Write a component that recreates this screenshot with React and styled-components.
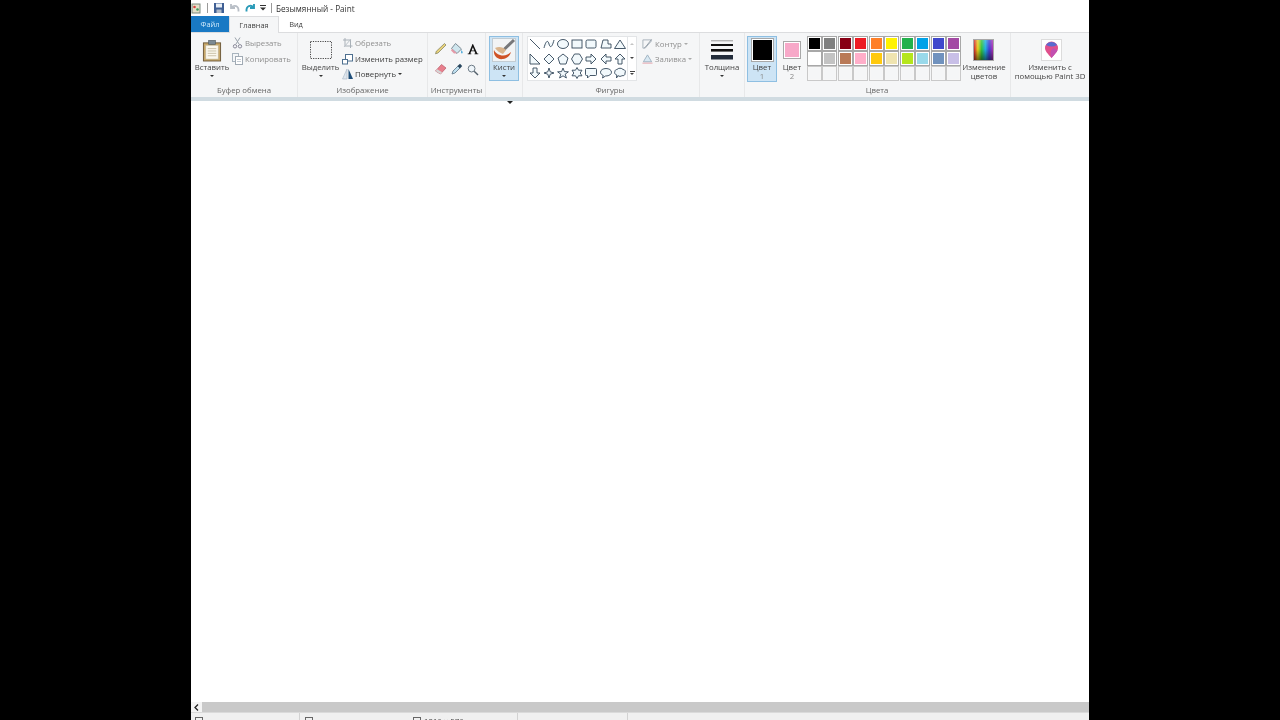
import React from 'react';
import styled, { createGlobalStyle } from 'styled-components';

const GlobalStyle = createGlobalStyle`
  html, body {
    margin: 0;
    padding: 0;
    background: #000;
  }
  * {
    box-sizing: border-box;
  }
`

const Stage = styled.div`
  width: 1280px;
  height: 720px;
  display: flex;
  justify-content: center;
  background: #000;
  overflow: hidden;
`

const Window = styled.div`
  width: 898px;
  height: 720px;
  display: flex;
  flex-direction: column;
  background: #fff;
  font-family: "Open Sans", "Noto Sans", sans-serif;
  font-size: 7.8px;
  color: #444;
  filter: blur(0.3px);
`

const TitleBar = styled.div`
  height: 16px;
  flex: none;
  display: flex;
  align-items: center;
  background: #fff;
  overflow: hidden;
`

const QuickButton = styled.div`
  width: ${p => p.$w}px;
  height: 16px;
  flex: none;
  display: flex;
  align-items: center;
  justify-content: center;
`

const TitleDivider = styled.div`
  width: 1px;
  height: 10px;
  flex: none;
  margin: 0 ${p => p.$right}px 0 ${p => p.$left}px;
  background: #9a9a9a;
`

const TitleText = styled.span`
  font-size: 8.2px;
  color: #333;
  white-space: nowrap;
`

const TabRow = styled.div`
  height: 17px;
  flex: none;
  display: flex;
  background: #fff;
  border-bottom: 1px solid #dcdddf;
`

const Tab = styled.div`
  width: ${p => p.$w}px;
  height: ${p => (p.$active ? 17 : 16)}px;
  display: flex;
  align-items: center;
  justify-content: center;
  font-size: 7.4px;
  color: #444;
  background: ${p => (p.$active ? '#f5f6f7' : 'transparent')};
  border: ${p => (p.$active ? '1px solid #dcdddf' : 'none')};
  border-bottom: none;
`

const FileTab = styled(Tab)`
  background: #1979c4;
  color: #cfe8fa;
`

const Ribbon = styled.div`
  height: 64px;
  flex: none;
  display: flex;
  background: #f5f6f7;
`

const Group = styled.div`
  width: ${p => p.$w}px;
  flex: none;
  display: flex;
  flex-direction: column;
  border-right: 1px solid #e7e8e9;
  &:last-child {
    border-right: none;
  }
`

const GroupBody = styled.div`
  height: 51px;
  display: flex;
  gap: ${p => p.$gap || 0}px;
  padding: 3px 0 0 ${p => p.$left || 0}px;
`

const GroupLabel = styled.div`
  height: 13px;
  margin-left: ${p => p.$shift || 0}px;
  text-align: center;
  line-height: 13px;
  font-size: 7.8px;
  color: #666;
  white-space: nowrap;
`

const LargeButton = styled.div`
  width: ${p => p.$w}px;
  height: ${p => p.$h || 46}px;
  flex: none;
  display: flex;
  flex-direction: column;
  align-items: center;
  padding-top: 1px;
  background: ${p => (p.$active ? '#cde4f5' : 'transparent')};
  border: 1px solid ${p => (p.$active ? '#8ebfe2' : 'transparent')};
`

const LargeIcon = styled.div`
  height: 25px;
  padding-bottom: 1px;
  flex: none;
  display: flex;
  align-items: center;
  justify-content: center;
`

const LargeLabel = styled.div`
  font-size: 7.8px;
  line-height: 9px;
  text-align: center;
  white-space: nowrap;
  color: ${p => (p.$faded ? '#8a8a8a' : '#444')};
`

const Caret = styled.div`
  width: 0;
  height: 0;
  flex: none;
  margin-top: ${p => (p.$top === undefined ? 3 : p.$top)}px;
  border-left: 2.5px solid transparent;
  border-right: 2.5px solid transparent;
  border-top: 2.5px solid ${p => (p.$faded ? '#aaa' : '#333')};
`

const SmallStack = styled.div`
  display: flex;
  flex-direction: column;
  gap: ${p => p.$gap}px;
  padding-top: ${p => p.$top}px;
`

const SmallButton = styled.div`
  height: 13px;
  display: flex;
  align-items: center;
  gap: 2px;
  white-space: nowrap;
  color: ${p => (p.$disabled ? '#8f8f8f' : '#3c3c3c')};
`

const IconSlot = styled.span`
  width: 11px;
  height: 12px;
  flex: none;
  display: flex;
  align-items: center;
  justify-content: center;
`

const ToolGrid = styled.div`
  display: grid;
  grid-template-columns: repeat(3, 16.5px);
  grid-auto-rows: 21px;
  margin: 2px 0 0 2px;
  justify-items: center;
  align-items: center;
`

const ShapeFrame = styled.div`
  width: 110px;
  height: 45px;
  flex: none;
  display: flex;
  background: #fff;
  border: 1px solid #e3e5e7;
`

const ShapeGrid = styled.div`
  width: 99px;
  display: grid;
  grid-template-columns: repeat(7, 14.1px);
  grid-auto-rows: 14.5px;
  justify-items: center;
  align-items: center;
`

const ShapeScroll = styled.div`
  flex: 1;
  display: flex;
  flex-direction: column;
  border-left: 1px solid #e3e5e7;
`

const ScrollCell = styled.div`
  flex: 1;
  display: flex;
  flex-direction: column;
  gap: 1px;
  align-items: center;
  justify-content: center;
`

const ScrollBarMark = styled.div`
  width: 5px;
  height: 1px;
  background: #444;
`

const ScrollMark = styled.div`
  width: 0;
  height: 0;
  border-left: 2px solid transparent;
  border-right: 2px solid transparent;
  border-${p => (p.$up ? 'bottom' : 'top')}: 2px solid ${p => (p.$faded ? '#c4c4c4' : '#444')};
`

const Swatch = styled.div`
  width: ${p => p.$w}px;
  height: ${p => p.$h}px;
  background: ${p => p.$color};
  border: 1px solid #fff;
  outline: 1px solid #a8a8a8;
`

const Palette = styled.div`
  display: grid;
  grid-template-columns: repeat(10, 13px);
  grid-auto-rows: 13px;
  gap: 2px 2.45px;
  flex: none;
  margin: 1px 0 0 1px;
`

const PaletteCell = styled.div`
  background: ${p => p.$color};
  border: 1px solid ${p => (p.$empty ? '#f7f7f7' : '#fff')};
  outline: 1px solid ${p => (p.$empty ? '#c9c9c9' : '#a8a8a8')};
`

const Spectrum = styled.div`
  width: 21px;
  height: 22px;
  background:
    linear-gradient(180deg, rgba(255, 255, 255, 0.2), rgba(255, 255, 255, 0) 45%, rgba(0, 0, 0, 0.5)),
    linear-gradient(90deg, #d02030, #e8d020, #30c040, #20b0e0, #4040d0, #b030b0);
  border: 1px solid #a8a8a8;
`

const IconCard = styled.div`
  width: 21px;
  height: 22px;
  margin-left: 2px;
  display: flex;
  align-items: center;
  justify-content: center;
  background: #fff;
  border: 1px solid #dcdcdc;
`

const CanvasArea = styled.div`
  flex: 1;
  min-height: 0;
  position: relative;
  background: #fff;
  border-top: 4px solid #d0dbe1;
`

const ResizeHandle = styled.div`
  position: absolute;
  left: 316px;
  top: 0;
  width: 0;
  height: 0;
  border-left: 3.5px solid transparent;
  border-right: 3.5px solid transparent;
  border-top: 3px solid #222;
`

const HScroll = styled.div`
  height: 10px;
  flex: none;
  display: flex;
  background: #c9c9c9;
`

const ScrollArrow = styled.div`
  width: 11px;
  flex: none;
  display: flex;
  align-items: center;
  justify-content: center;
  background: #f4f4f4;
`

const StatusBar = styled.div`
  height: 8px;
  flex: none;
  display: flex;
  overflow: hidden;
  background: #f0f0f0;
  border-top: 1px solid #dadada;
`

const StatusCell = styled.div`
  width: ${p => p.$w}px;
  flex: none;
  display: flex;
  padding: 4px 0 0 ${p => p.$pad}px;
  border-right: 1px solid #d2d2d2;
`

const StatusSize = styled.div`
  display: flex;
  gap: 3px;
  margin-left: ${p => p.$left}px;
  font-size: 7.8px;
  line-height: 9px;
  color: #444;
  white-space: nowrap;
`

const Svg = ({ w = 12, h = 12, view, children }) => (
  <svg width={w} height={h} viewBox={view || `0 0 ${w} ${h}`} fill="none">{children}</svg>
)

const row1 = ['#000000', '#7f7f7f', '#880015', '#ed1c24', '#ff7f27', '#fff200', '#22b14c', '#00a2e8', '#3f48cc', '#a349a4']
const row2 = ['#ffffff', '#c3c3c3', '#b97a57', '#ffaec9', '#ffc90e', '#efe4b0', '#b5e61d', '#99d9ea', '#7092be', '#c8bfe7']

// outlines of the shapes gallery, row by row, in a 12x12 box
const shapes = [
  <path d="M1 1 L11 11" />,
  <path d="M1 10 C3 2 5 2 6 6 S9 10 11 2" />,
  <ellipse cx="6" cy="6" rx="5.5" ry="4.5" />,
  <rect x="1" y="2" width="10" height="8" />,
  <rect x="1" y="2" width="10" height="8" rx="1.5" />,
  <path d="M3 2 H8 L8 6 L11 6 L11 10 H1 Z" />,
  <path d="M6 2 L11.5 10.5 H0.5 Z" />,
  <path d="M1 1 L11 11 H1 Z" />,
  <path d="M6 1 L11 6 L6 11 L1 6 Z" />,
  <path d="M6 1 L11 5 L9 11 H3 L1 5 Z" />,
  <path d="M3.5 1 H8.5 L11.5 6 L8.5 11 H3.5 L0.5 6 Z" />,
  <path d="M1 4 H6 V1 L11 6 L6 11 V8 H1 Z" />,
  <path d="M11 4 H6 V1 L1 6 L6 11 V8 H11 Z" />,
  <path d="M6 1 L11 6 H8 V11 H4 V6 H1 Z" />,
  <path d="M4 1 H8 V6 H11 L6 11 L1 6 H4 Z" />,
  <path d="M6 1 L7.2 4.8 L11 6 L7.2 7.2 L6 11 L4.8 7.2 L1 6 L4.8 4.8 Z" />,
  <path d="M6 1 L7.4 4.6 L11.4 4.8 L8.2 7.2 L9.4 11 L6 8.8 L2.6 11 L3.8 7.2 L0.6 4.8 L4.6 4.6 Z" />,
  <path d="M6 0.5 L7.5 3.2 H11 L9.2 6 L11 8.8 H7.5 L6 11.5 L4.5 8.8 H1 L2.8 6 L1 3.2 H4.5 Z" />,
  <path d="M1.5 1.5 H10.5 Q11.5 1.5 11.5 2.5 V7.5 Q11.5 8.5 10.5 8.5 H5 L2.5 11 V8.5 H1.5 Q0.5 8.5 0.5 7.5 V2.5 Q0.5 1.5 1.5 1.5 Z" />,
  <path d="M6 1.5 C9 1.5 11.5 3 11.5 5.2 C11.5 7.4 9 9 6 9 L5.5 9 L2.5 11 L3.2 8.4 C1.5 7.7 0.5 6.6 0.5 5.2 C0.5 3 3 1.5 6 1.5 Z" />,
  <path d="M3 2.5 C4 0.8 8 0.8 9 2.5 C11 2.5 12 4.5 11 6 C11.5 8 9.5 9.2 8 8.6 C7 9.6 5 9.6 4 8.6 L2.5 11 L2.8 8 C0.8 7.5 0 5.5 1 4.2 C1 3 2 2.5 3 2.5 Z" />,
]

const PasteIcon = () => (
  <Svg w={20} h={23} view="0 0 21 23">
    <rect x="1.5" y="3.5" width="18" height="19" fill="#c9a868" stroke="#6e5a3a" />
    <rect x="4" y="6" width="13" height="14.5" fill="#fbf8ee" stroke="#bcb69f" strokeWidth="0.6" />
    <path d="M6 9.5H15M6 12H15M6 14.5H15M6 17H15" stroke="#c8c0a6" />
    <rect x="7" y="1" width="7" height="4" fill="#7b8a94" stroke="#4f5a62" strokeWidth="0.7" />
  </Svg>
)

const CutIcon = () => (
  <Svg w={11} h={12}>
    <path d="M3 0.5 L7 7 M8 0.5 L4 7" stroke="#9aa3ab" strokeWidth="1" />
    <circle cx="3" cy="9.3" r="1.7" stroke="#8a8a9a" />
    <circle cx="8" cy="9.3" r="1.7" stroke="#8a8a9a" />
  </Svg>
)

const CopyIcon = () => (
  <Svg w={11} h={12}>
    <rect x="0.5" y="0.5" width="6" height="8" fill="#f4f6f8" stroke="#a8b4be" />
    <rect x="3.5" y="3.5" width="7" height="8" fill="#fff" stroke="#a0aab4" />
    <path d="M5 6.5H9M5 8.5H9" stroke="#c4ccd4" />
  </Svg>
)

const SelectIcon = () => (
  <Svg w={22} h={18}>
    <rect x="0.5" y="0.5" width="21" height="17" stroke="#444" strokeDasharray="1.2 1.2" />
  </Svg>
)

const CropIcon = () => (
  <Svg w={11} h={12}>
    <path d="M3 1V9H10.5M1 3H8.5V11" stroke="#a9b1b8" />
    <path d="M2 10L9 2" stroke="#bcc3c9" />
  </Svg>
)

const ResizeIcon = () => (
  <Svg w={11} h={12}>
    <rect x="3.5" y="1.5" width="7" height="6.5" fill="#fff" stroke="#4d6f8f" />
    <rect x="0.5" y="6.5" width="5" height="4.5" fill="#fff" stroke="#4d6f8f" />
  </Svg>
)

const RotateIcon = () => (
  <Svg w={11} h={12}>
    <path d="M6.5 1V11H11Z" fill="#1f4e79" />
    <path d="M5 1V11H0.5Z" fill="#dfe7ee" stroke="#a4b4c2" strokeWidth="0.6" />
  </Svg>
)

const PencilIcon = () => (
  <Svg w={13} h={13}>
    <path d="M10.5 1.5 L12 3 L4 11 L1.5 11.8 L2.3 9.3 Z" fill="#e9d27a" stroke="#7c7c5a" strokeWidth="0.7" />
  </Svg>
)

const FillIcon = () => (
  <Svg w={14} h={13}>
    <path d="M5.5 1.5 L11.5 7 L7 11.5 L1.5 6.5 Z" fill="#cfe6ee" stroke="#7e8c96" />
    <path d="M11.5 8 Q13.5 10.5 12 11.5 Q10.5 11.5 11.5 8 Z" fill="#42a5d8" />
    <path d="M2 6.8 L7 11.3 L4 11.5 L1 8.5 Z" fill="#e59aa8" />
  </Svg>
)

const TextIcon = () => (
  <Svg w={12} h={12}>
    <path d="M6 1 L10.3 10.5 H11.3 V11.3 H7.5 V10.5 H8.4 L7.5 8.3 H4.2 L3.3 10.5 H4.3 V11.3 H0.7 V10.5 H1.7 L5.5 1 Z M5.9 4.2 L4.6 7.4 H7.2 Z" fill="#111" fillRule="evenodd" />
  </Svg>
)

const EraserIcon = () => (
  <Svg w={13} h={13}>
    <path d="M7.5 1.5 L12 5 L6.5 11 L1.5 8 Z" fill="#e87f8d" stroke="#b85a68" strokeWidth="0.7" />
    <path d="M1.5 8 L6.5 11 L8 9.2 L3.2 6.2 Z" fill="#d5d5d5" />
  </Svg>
)

const PickerIcon = () => (
  <Svg w={13} h={13}>
    <path d="M2 11 L3 8 L8 3 L10 5 L5 10 Z" fill="#bfe0f0" stroke="#5c7484" strokeWidth="0.8" />
    <path d="M7.5 3 L10 0.8 L12.2 3 L10 5.5 Z" fill="#28465e" />
  </Svg>
)

const ZoomIcon = () => (
  <Svg w={12} h={12}>
    <circle cx="4.6" cy="4.6" r="3.4" fill="#eef5fa" stroke="#6d7b86" />
    <path d="M7.2 7.2 L11 11" stroke="#52606b" strokeWidth="1.4" />
  </Svg>
)

const BrushIcon = () => (
  <Svg w={24} h={24}>
    <rect x="0.5" y="0.5" width="23" height="23" fill="#f2f4f5" stroke="#c3ccd2" />
    <path d="M22 2 L12 11.5" stroke="#77787a" strokeWidth="3" />
    <path d="M2 12 C1 17 5 22 11 21 C15 20.5 18 18 19 14 C16 17 12 18.5 8 17 C5 16 3 14.5 2 12 Z" fill="#cf5326" />
    <path d="M3 10 C7 8 11 9 14 12 L11 16 C8 15 5 13 3 10 Z" fill="#d9b48c" />
  </Svg>
)

const OutlineIcon = () => (
  <Svg w={12} h={12}>
    <path d="M1 1.5H10V3L3.5 10.5H1Z" stroke="#a5afb8" />
    <path d="M10.5 1 L4 9 L2.5 10" stroke="#8e99a3" />
  </Svg>
)

const FillShapeIcon = () => (
  <Svg w={12} h={12}>
    <path d="M6 1.5 L10.5 9 H1.5 Z" fill="#d8e8f2" stroke="#9bb0c0" />
    <path d="M0.5 10.5 H11.5" stroke="#e2a0a8" />
  </Svg>
)

const ThicknessIcon = () => (
  <Svg w={22} h={20}>
    <rect x="0" y="0" width="22" height="1.4" fill="#b4b4b4" />
    <rect x="0" y="4" width="22" height="2" fill="#111" />
    <rect x="0" y="9" width="22" height="2.6" fill="#111" />
    <rect x="0" y="15" width="22" height="4.5" fill="#222c3a" />
  </Svg>
)

const Paint3DIcon = () => (
  <Svg w={15} h={18}>
    <path d="M7.5 17 C4 13 1 10 1 7 A6.5 6.5 0 0 1 14 7 C14 10 11 13 7.5 17 Z" fill="#e0508c" />
    <path d="M2 4 A6.5 6.5 0 0 1 13 4 Q8 7 2 4 Z" fill="#5a6ad0" />
    <path d="M7.5 17 C6 13 6 10 9 7 C12 8 13 9 13.5 9.5 C12 12 10 14 7.5 17 Z" fill="#c24fb0" />
  </Svg>
)

const Clipboard = () => (
  <Group $w={107}>
    <GroupBody $left={4} $gap={3}>
      <LargeButton $w={34}>
        <LargeIcon><PasteIcon /></LargeIcon>
        <LargeLabel>Вставить</LargeLabel>
        <Caret />
      </LargeButton>
      <SmallStack $gap={2.5} $top={0.5}>
        <SmallButton $disabled><IconSlot><CutIcon /></IconSlot>Вырезать</SmallButton>
        <SmallButton $disabled><IconSlot><CopyIcon /></IconSlot>Копировать</SmallButton>
      </SmallStack>
    </GroupBody>
    <GroupLabel>Буфер обмена</GroupLabel>
  </Group>
)

const ImageTools = () => (
  <Group $w={130}>
    <GroupBody $left={4} $gap={3}>
      <LargeButton $w={37}>
        <LargeIcon><SelectIcon /></LargeIcon>
        <LargeLabel>Выделить</LargeLabel>
        <Caret />
      </LargeButton>
      <SmallStack $gap={2.5} $top={0.5}>
        <SmallButton $disabled><IconSlot><CropIcon /></IconSlot>Обрезать</SmallButton>
        <SmallButton><IconSlot><ResizeIcon /></IconSlot>Изменить размер</SmallButton>
        <SmallButton><IconSlot><RotateIcon /></IconSlot>Повернуть<Caret $top={0} /></SmallButton>
      </SmallStack>
    </GroupBody>
    <GroupLabel>Изображение</GroupLabel>
  </Group>
)

const Tools = () => (
  <Group $w={58}>
    <GroupBody $left={2}>
      <ToolGrid>
        <PencilIcon />
        <FillIcon />
        <TextIcon />
        <EraserIcon />
        <PickerIcon />
        <ZoomIcon />
      </ToolGrid>
    </GroupBody>
    <GroupLabel>Инструменты</GroupLabel>
  </Group>
)

const Brushes = () => (
  <Group $w={37}>
    <GroupBody $left={3}>
      <LargeButton $w={30} $h={45} $active>
        <LargeIcon><BrushIcon /></LargeIcon>
        <LargeLabel>Кисти</LargeLabel>
        <Caret />
      </LargeButton>
    </GroupBody>
    <GroupLabel />
  </Group>
)

const Shapes = () => (
  <Group $w={177}>
    <GroupBody $left={4} $gap={5}>
      <ShapeFrame>
        <ShapeGrid>
          {shapes.map((shape, i) => (
            <svg key={i} width="12" height="12" viewBox="0 0 12 12" fill="#f2f9fc" stroke="#33475a" strokeWidth="0.9">
              {shape}
            </svg>
          ))}
        </ShapeGrid>
        <ShapeScroll>
          <ScrollCell><ScrollMark $up $faded /></ScrollCell>
          <ScrollCell><ScrollMark /></ScrollCell>
          <ScrollCell><ScrollBarMark /><ScrollMark /></ScrollCell>
        </ShapeScroll>
      </ShapeFrame>
      <SmallStack $gap={2} $top={1}>
        <SmallButton $disabled><IconSlot><OutlineIcon /></IconSlot>Контур<Caret $top={0} $faded /></SmallButton>
        <SmallButton $disabled><IconSlot><FillShapeIcon /></IconSlot>Заливка<Caret $top={0} $faded /></SmallButton>
      </SmallStack>
    </GroupBody>
    <GroupLabel $shift={-2}>Фигуры</GroupLabel>
  </Group>
)

const Thickness = () => (
  <Group $w={45}>
    <GroupBody $left={2}>
      <LargeButton $w={40}>
        <LargeIcon><ThicknessIcon /></LargeIcon>
        <LargeLabel>Толщина</LargeLabel>
        <Caret />
      </LargeButton>
    </GroupBody>
    <GroupLabel />
  </Group>
)

const Colors = () => (
  <Group $w={266}>
    <GroupBody $left={2} $gap={2}>
      <LargeButton $w={30} $active>
        <LargeIcon><Swatch $w={21} $h={22} $color="#000" /></LargeIcon>
        <LargeLabel>Цвет</LargeLabel>
        <LargeLabel $faded>1</LargeLabel>
      </LargeButton>
      <LargeButton $w={26}>
        <LargeIcon><Swatch $w={16} $h={16} $color="#f7a8c8" /></LargeIcon>
        <LargeLabel>Цвет</LargeLabel>
        <LargeLabel $faded>2</LargeLabel>
      </LargeButton>
      <Palette>
        {row1.map(c => <PaletteCell key={c} $color={c} />)}
        {row2.map(c => <PaletteCell key={c} $color={c} />)}
        {Array.from({ length: 10 }, (_, i) => <PaletteCell key={i} $color="#f5f6f7" $empty />)}
      </Palette>
      <LargeButton $w={44}>
        <LargeIcon><Spectrum /></LargeIcon>
        <LargeLabel>Изменение</LargeLabel>
        <LargeLabel>цветов</LargeLabel>
      </LargeButton>
    </GroupBody>
    <GroupLabel $shift={-1}>Цвета</GroupLabel>
  </Group>
)

const Paint3D = () => (
  <Group $w={78}>
    <GroupBody>
      <LargeButton $w={78}>
        <LargeIcon><IconCard><Paint3DIcon /></IconCard></LargeIcon>
        <LargeLabel>Изменить с</LargeLabel>
        <LargeLabel>помощью Paint 3D</LargeLabel>
      </LargeButton>
    </GroupBody>
  </Group>
)

const StatusGlyph = () => (
  <Svg w={8} h={8}>
    <rect x="0.5" y="0.5" width="7" height="7" stroke="#666" />
  </Svg>
)

const App = () => (
  <Stage>
    <GlobalStyle />
    <Window>
      <TitleBar>
        <QuickButton $w={10}>
          <Svg w={10} h={11}>
            <rect x="1" y="1" width="8" height="9" fill="#e4e0c8" stroke="#7d8a80" />
            <circle cx="3.5" cy="4" r="1.3" fill="#d84040" />
            <circle cx="6.5" cy="6.5" r="1.3" fill="#3a9a5a" />
          </Svg>
        </QuickButton>
        <TitleDivider $left={6} $right={6} />
        <QuickButton $w={10}>
          <Svg w={10} h={10}>
            <rect x="0" y="0" width="10" height="10" fill="#3f5f94" />
            <rect x="2" y="0.5" width="6" height="4" fill="#e8eef5" />
            <rect x="2.5" y="6.5" width="5" height="3.5" fill="#aeb9c8" />
          </Svg>
        </QuickButton>
        <QuickButton $w={21}>
          <Svg w={10} h={10}>
            <path d="M1 1 V5 H5 M1.5 4.5 C4 1.5 9 2.5 8.5 8.5" stroke="#b8bec6" strokeWidth="1.8" />
          </Svg>
        </QuickButton>
        <QuickButton $w={10}>
          <Svg w={10} h={10}>
            <path d="M9 1 V5 H5 M8.5 4.5 C6 1.5 1 2.5 1.5 8.5" stroke="#2b9bb8" strokeWidth="1.9" />
          </Svg>
        </QuickButton>
        <QuickButton $w={16}>
          <Svg w={6} h={6}>
            <path d="M0 0.5H6" stroke="#333" />
            <path d="M0 2.5H6L3 5.5Z" fill="#333" />
          </Svg>
        </QuickButton>
        <TitleDivider $left={0} $right={4} />
        <TitleText>Безымянный - Paint</TitleText>
      </TitleBar>
      <TabRow>
        <FileTab $w={38}>Файл</FileTab>
        <Tab $w={50} $active>Главная</Tab>
        <Tab $w={34}>Вид</Tab>
      </TabRow>
      <Ribbon>
        <Clipboard />
        <ImageTools />
        <Tools />
        <Brushes />
        <Shapes />
        <Thickness />
        <Colors />
        <Paint3D />
      </Ribbon>
      <CanvasArea>
        <ResizeHandle />
      </CanvasArea>
      <HScroll>
        <ScrollArrow>
          <Svg w={5} h={7}>
            <path d="M4 0.5 L1 3.5 L4 6.5" stroke="#222" strokeWidth="1.3" />
          </Svg>
        </ScrollArrow>
      </HScroll>
      <StatusBar>
        <StatusCell $w={109} $pad={4}><StatusGlyph /></StatusCell>
        <StatusCell $w={218} $pad={5}>
          <StatusGlyph />
          <StatusSize $left={100}><StatusGlyph />1016 × 576</StatusSize>
        </StatusCell>
        <StatusCell $w={110} $pad={0} />
      </StatusBar>
    </Window>
  </Stage>
)

export default App
